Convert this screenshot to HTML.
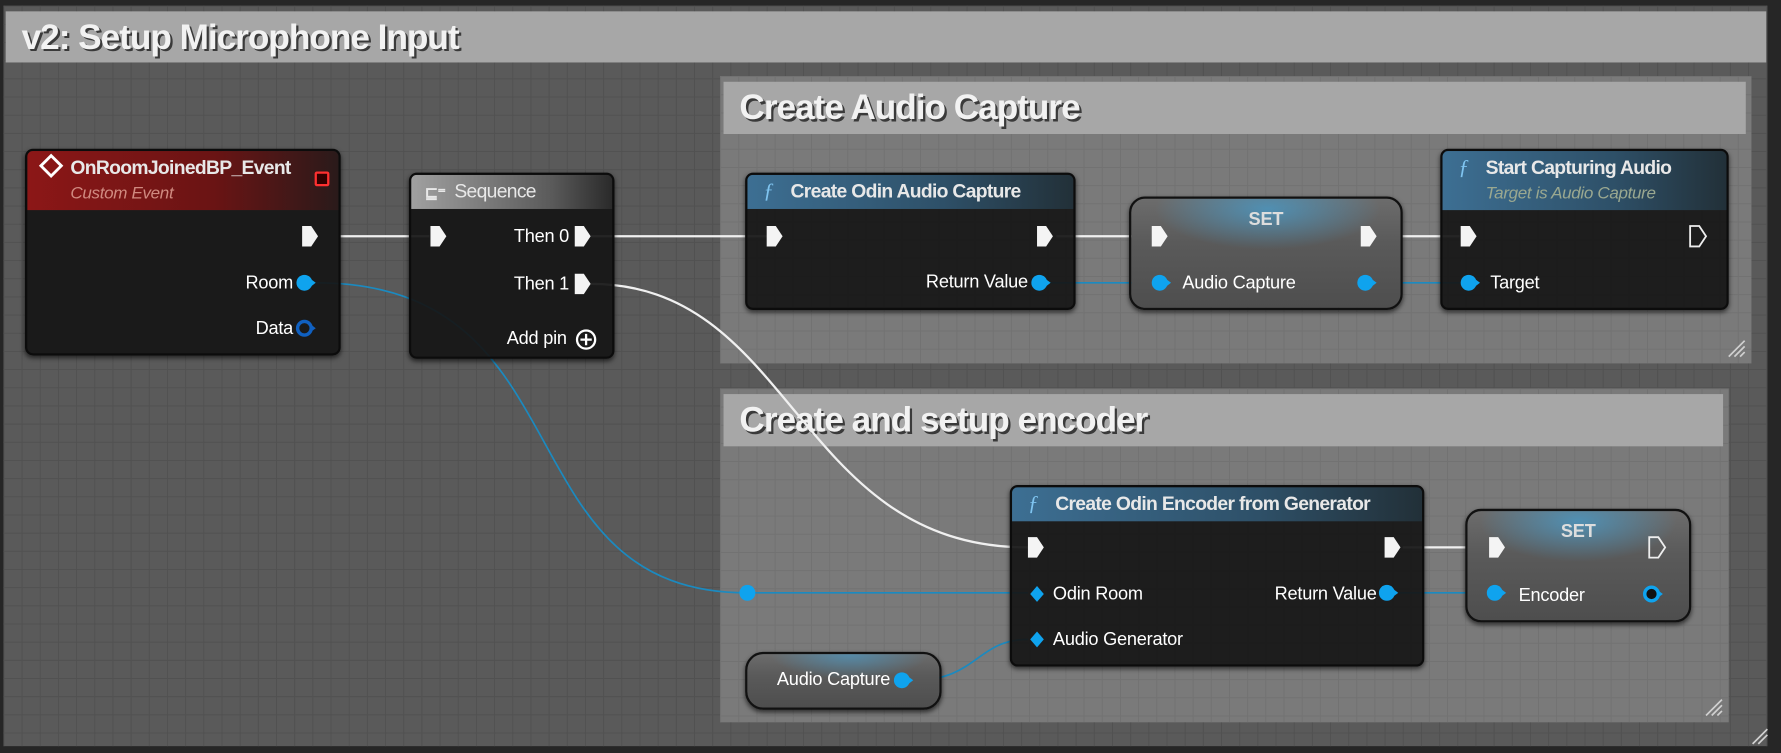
<!DOCTYPE html>
<html><head><meta charset="utf-8"><style>
html,body{margin:0;padding:0;background:#262626;overflow:hidden;width:1781px;height:753px}
#s{position:absolute;left:0;top:0;width:1568px;height:663px;transform:scale(1.13584,1.1357);transform-origin:0 0;font-family:"Liberation Sans Narrow","Liberation Sans",sans-serif;color:#fff}
.abs{position:absolute}
.grid{background-color:#5a5a5a;background-image:linear-gradient(#515151 1px,transparent 1px),linear-gradient(90deg,#515151 1px,transparent 1px);background-size:16px 16px}
.grid2{background-color:#7a7a7a;background-image:linear-gradient(#727272 1px,transparent 1px),linear-gradient(90deg,#727272 1px,transparent 1px);background-size:16px 16px}
.tb{position:absolute;background:#a7a7a7;font-weight:bold;font-size:31px;color:#f2f2f2;text-shadow:2px 2px 0 #3a3a3a;box-sizing:border-box;padding-left:14px;line-height:46px;letter-spacing:-0.9px}
.node{position:absolute;background:rgba(22,22,22,.93);border:2px solid #0c0c0c;border-radius:7px;box-shadow:0 2px 4px rgba(0,0,0,.6);overflow:hidden}
.hd{position:absolute;left:0;right:0;top:0;font-size:17px;font-weight:bold;color:#e8e8e8;letter-spacing:-0.6px}
.lbl{position:absolute;font-size:16px;color:#fff;white-space:nowrap;letter-spacing:-0.2px}
.var{position:absolute;border:2px solid #111;border-radius:14px;background:linear-gradient(#6c6c6c,#5a5a5a 40%,#4e4e4e);box-shadow:0 2px 4px rgba(0,0,0,.6);overflow:hidden}
</style></head><body><div id="s">
<div class="abs grid" style="left:3px;top:5px;width:1553px;height:652px"></div>
<div class="tb" style="left:5px;top:10px;width:1550px;height:45px">v2: Setup Microphone Input</div>
<div class="abs grid2" style="left:634px;top:67px;width:908px;height:253px"></div>
<div class="tb" style="left:637px;top:72px;width:900px;height:46px;padding-left:14px">Create Audio Capture</div>
<div class="abs grid2" style="left:634px;top:342px;width:888px;height:294px"></div>
<div class="tb" style="left:637px;top:347px;width:880px;height:46px">Create and setup encoder</div>

<svg class="abs" style="left:0;top:0" width="1568" height="663">
<g fill="none" stroke-width="2">
<path d="M299 208H378" stroke="#f0f0f0"/>
<path d="M520 208H676" stroke="#f0f0f0"/>
<path d="M930 208H1014" stroke="#f0f0f0"/>
<path d="M1210 208H1285" stroke="#f0f0f0"/>
<path d="M1235 482H1310" stroke="#f0f0f0"/>
<path d="M520 250C700 250 700 482 905 482" stroke="#f0f0f0"/>
<path d="M278 249C520 249 440 522 658 522" stroke="#1b8ac0" stroke-width="1.5"/>
<path d="M658 522H905" stroke="#1b8ac0" stroke-width="1.5"/>
<path d="M925 249H1015M1205 249H1288M1232 522H1310" stroke="#1b8ac0" stroke-width="1.5"/>
<path d="M805 599C860 599 860 563 905 563" stroke="#1b8ac0" stroke-width="1.5"/>
</g>
<g stroke="#d0d0d0" stroke-width="1.5"><path d="M1522 314L1536 300M1527 314L1536 305M1532 314L1536 310M1502 630L1516 616M1507 630L1516 621M1512 630L1516 626M1543 655L1556 642M1548 655L1556 647"/></g>
</svg>

<div class="node" style="left:22px;top:131px;width:274px;height:178px">
<div class="hd" style="height:52px;background:linear-gradient(90deg,#8c1717,#6a1414 60%,#2a1a1a)">
<div class="abs" style="left:38px;top:5px">OnRoomJoinedBP_Event</div>
<div class="abs" style="left:38px;top:29px;font-size:15px;font-weight:normal;font-style:italic;color:#d08a80;letter-spacing:-0.3px">Custom Event</div>
<div class="abs" style="left:253px;top:18px;width:9px;height:9px;border:2px solid #ff3030;background:#300;border-radius:2px"></div>
</div>
<div class="lbl" style="right:40px;top:108px">Room</div>
<div class="lbl" style="right:40px;top:148px">Data</div>
</div>
<div class="node" style="left:360px;top:152px;width:177px;height:160px">
<div class="hd" style="height:30px;background:linear-gradient(90deg,#a0a0a0,#5a5a5a 70%,#2a2a2a)">
<div class="abs" style="left:38px;top:5px;font-weight:normal">Sequence</div>
<div class="abs" style="left:12px;top:8px;font-size:14px;font-weight:bold">⊑⁼</div>
</div>
<div class="lbl" style="right:38px;top:46px">Then 0</div>
<div class="lbl" style="right:38px;top:88px">Then 1</div>
<div class="lbl" style="right:40px;top:136px">Add pin</div>
</div>
<div class="node" style="left:656px;top:152px;width:287px;height:117px">
<div class="hd" style="height:30px;background:linear-gradient(90deg,#3d6f93,#2e5068 60%,#223038)">
<div class="abs" style="left:14px;top:4px;font-style:italic;color:#7fc4f0;font-weight:normal;font-family:'Liberation Serif',serif;font-size:19px">ƒ</div>
<div class="abs" style="left:38px;top:5px">Create Odin Audio Capture</div>
</div>
<div class="lbl" style="right:40px;top:86px">Return Value</div>
</div>
<div class="var" style="left:994px;top:173px;width:237px;height:96px">
<div class="abs" style="left:20px;top:0;width:200px;height:45px;background:radial-gradient(ellipse at 50% 20%,rgba(70,160,210,.7),rgba(70,160,210,0) 70%)"></div>
<div class="lbl" style="left:0;right:0;top:10px;text-align:center;color:#ddd;font-weight:bold">SET</div>
<div class="lbl" style="left:45px;top:66px">Audio Capture</div>
</div>
<div class="node" style="left:1268px;top:131px;width:250px;height:138px">
<div class="hd" style="height:52px;background:linear-gradient(90deg,#3d6f93,#2e5068 60%,#223038)">
<div class="abs" style="left:14px;top:4px;font-style:italic;color:#7fc4f0;font-weight:normal;font-family:'Liberation Serif',serif;font-size:19px">ƒ</div>
<div class="abs" style="left:38px;top:5px">Start Capturing Audio</div>
<div class="abs" style="left:38px;top:29px;font-size:15px;font-weight:normal;font-style:italic;color:#9aa890;letter-spacing:-0.3px">Target is Audio Capture</div>
</div>
<div class="lbl" style="left:42px;top:108px">Target</div>
</div>
<div class="node" style="left:889px;top:427px;width:361px;height:156px">
<div class="hd" style="height:30px;background:linear-gradient(90deg,#3d6f93,#2e5068 60%,#223038)">
<div class="abs" style="left:14px;top:4px;font-style:italic;color:#7fc4f0;font-weight:normal;font-family:'Liberation Serif',serif;font-size:19px">ƒ</div>
<div class="abs" style="left:38px;top:5px">Create Odin Encoder from Generator</div>
</div>
<div class="lbl" style="left:36px;top:86px">Odin Room</div>
<div class="lbl" style="left:36px;top:126px">Audio Generator</div>
<div class="lbl" style="right:40px;top:86px">Return Value</div>
</div>
<div class="var" style="left:1290px;top:448px;width:195px;height:96px">
<div class="abs" style="left:10px;top:0;width:175px;height:45px;background:radial-gradient(ellipse at 50% 20%,rgba(70,160,210,.7),rgba(70,160,210,0) 70%)"></div>
<div class="lbl" style="left:0;right:0;top:10px;text-align:center;color:#ddd;font-weight:bold">SET</div>
<div class="lbl" style="left:45px;top:66px">Encoder</div>
</div>
<div class="var" style="left:656px;top:574px;width:169px;height:47px;border-radius:16px">
<div class="abs" style="left:20px;top:0;width:140px;height:22px;background:radial-gradient(ellipse at 50% 0%,rgba(70,160,210,.6),rgba(70,160,210,0) 70%)"></div>
<div class="lbl" style="left:26px;top:14px">Audio Capture</div>
</div>

<svg class="abs" style="left:0;top:0" width="1568" height="663">
<defs>
<path id="ex" d="M-7 -9H1L7 0L1 9H-7Z"/>
<g id="dp"><circle r="7" fill="#0fa3ee"/><path d="M6 -3L10 0L6 3Z" fill="#0fa3ee"/></g>
</defs>
<g fill="#f4f4f4">
<use href="#ex" x="273" y="208"/><use href="#ex" x="386" y="208"/><use href="#ex" x="513" y="208"/><use href="#ex" x="513" y="250"/>
<use href="#ex" x="682" y="208"/><use href="#ex" x="920" y="208"/><use href="#ex" x="1021" y="208"/><use href="#ex" x="1205" y="208"/>
<use href="#ex" x="1293" y="208"/><use href="#ex" x="912" y="482"/><use href="#ex" x="1226" y="482"/><use href="#ex" x="1318" y="482"/>
</g>
<g fill="none" stroke="#eee" stroke-width="1.6"><use href="#ex" x="1495" y="208"/><use href="#ex" x="1459" y="482"/></g>
<use href="#dp" x="268" y="249"/><use href="#dp" x="915" y="249"/><use href="#dp" x="1021" y="249"/><use href="#dp" x="1202" y="249"/><use href="#dp" x="1293" y="249"/>
<use href="#dp" x="1221" y="522"/><use href="#dp" x="1316" y="522"/><use href="#dp" x="794" y="599"/>
<circle cx="658" cy="522" r="7" fill="#0fa3ee"/>
<circle cx="268" cy="289" r="6" fill="none" stroke="#1060c0" stroke-width="3"/><path d="M274 286L278 289L274 292Z" fill="#1060c0"/>
<circle cx="1454" cy="523" r="6" fill="#111" stroke="#0fa3ee" stroke-width="3"/><path d="M1460 520L1464 523L1460 526Z" fill="#0fa3ee"/>
<path d="M913 516L919 523L913 530L907 523Z" fill="#0fa3ee"/><path d="M913 556L919 563L913 570L907 563Z" fill="#0fa3ee"/>
<circle cx="516" cy="299" r="8" fill="none" stroke="#fff" stroke-width="2"/><path d="M516 294V304M511 299H521" stroke="#fff" stroke-width="2"/>
<path d="M45 137L54 146L45 155L36 146Z" fill="none" stroke="#fff" stroke-width="2.5"/>
</svg>
</div></body></html>
